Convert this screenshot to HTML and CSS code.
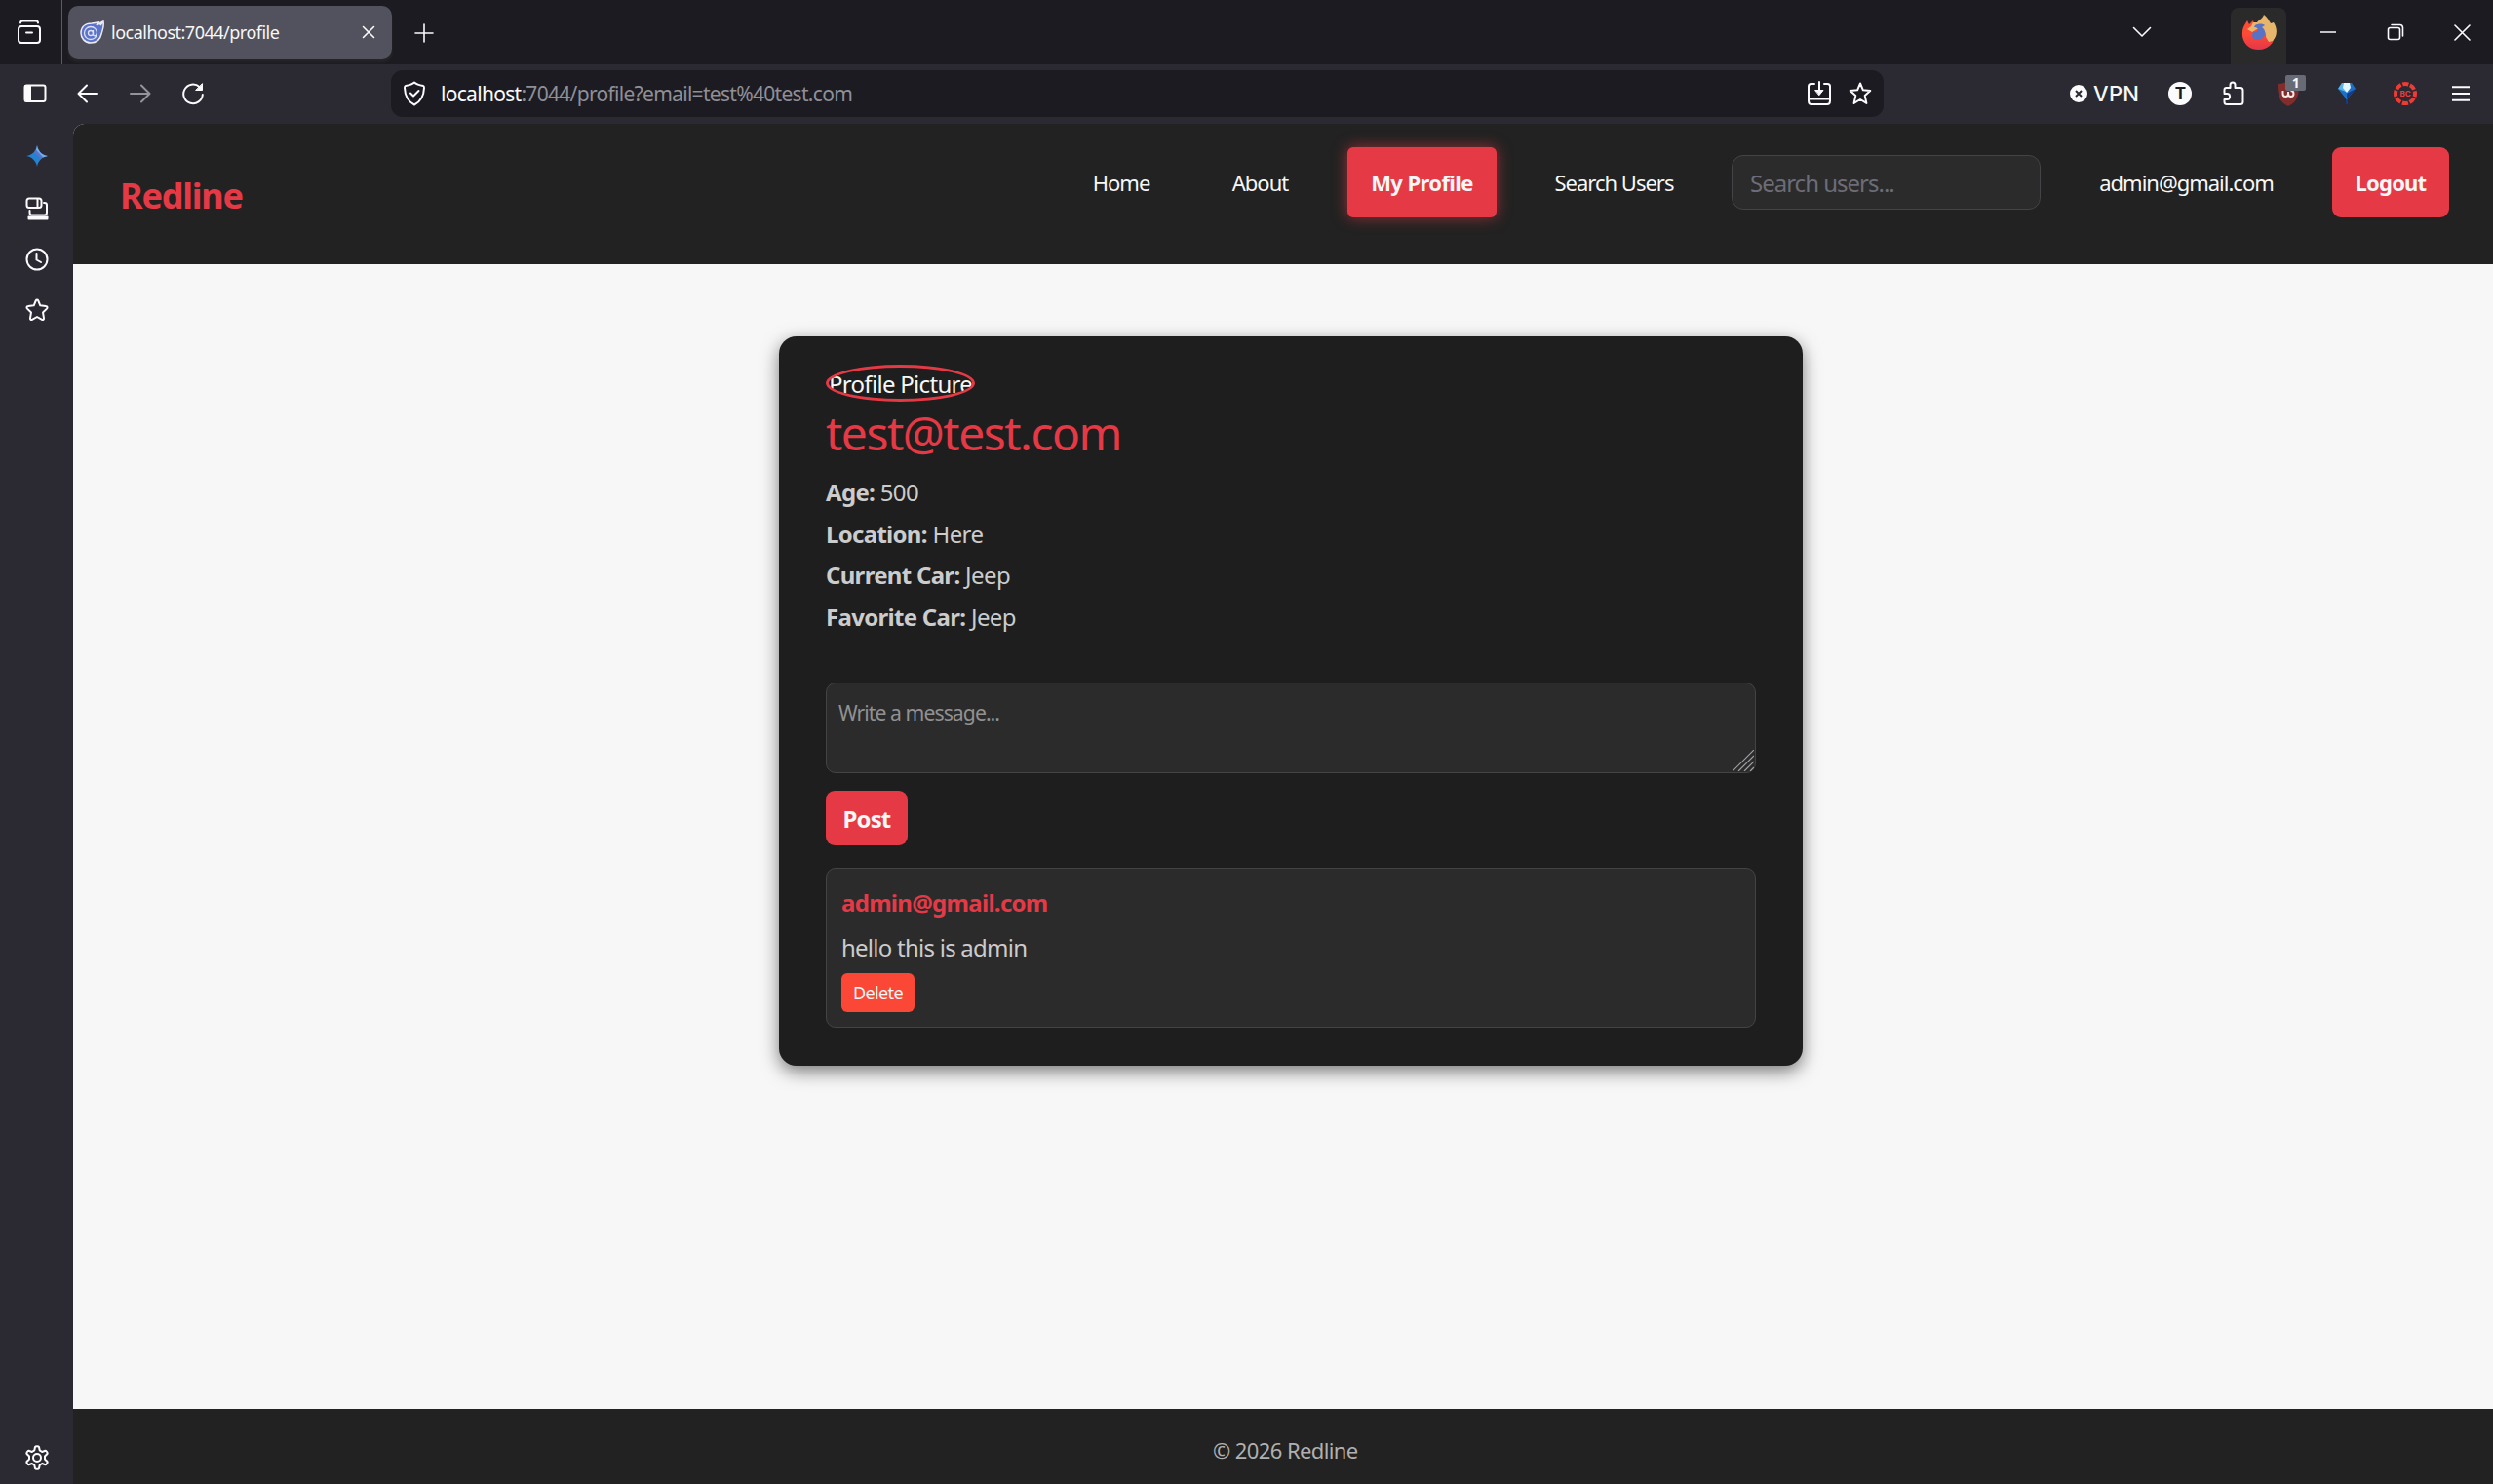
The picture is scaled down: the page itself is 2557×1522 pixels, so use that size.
FILE: index.html
```
<!DOCTYPE html>
<html lang="en">
<head>
    <meta charset="UTF-8">
    <title>localhost:7044/profile</title>
    <link rel="stylesheet" href="styles.css">
</head>
<body>
    <div class="titlebar">
        <div class="archive">
            <svg class="icon" width="26" height="26" viewBox="0 0 26 26"><path d="M4 3.500c0-1.500 1-2 2.500-2h13c1.500 0 2.500.5 2.500 2"/><rect x="2" y="7" width="22" height="17" rx="3"/><path d="M10 13.500h6"/></svg>
        </div>
        <div class="tab">
            <svg width="26" height="24" viewBox="0 0 26 24"><path d="M12 3C5 3 1 7 1 13c0 5 4 10 10 10 7 0 10-4 11-9 1-4 3-7 2-13l-3 4 1-3-5 3 2-3z" fill="#5a73cb" stroke="#eceaf5" stroke-width="1.500"/><circle cx="11" cy="13" r="6.500" fill="none" stroke="#dfe1f3" stroke-width="1.300"/><circle cx="11" cy="13" r="2.500" fill="none" stroke="#dfe1f3" stroke-width="1.300"/><path d="M13.500 10v4c0 3 4 2 4-1" fill="none" stroke="#dfe1f3" stroke-width="1.300"/></svg>
            <span class="tab-title">localhost:7044/profile</span>
            <svg class="icon thin" width="14" height="14" viewBox="0 0 14 14"><path d="M1.500 1.500l11 11M12.500 1.500l-11 11"/></svg>
        </div>
        <div class="new-tab">
            <svg class="icon thin" width="20" height="20" viewBox="0 0 20 20"><path d="M10 1v18M1 10h18"/></svg>
        </div>
        <div class="window-buttons">
            <div class="list-tabs">
                <svg class="icon thin" width="20" height="12" viewBox="0 0 20 12"><path d="M1.500 1.500L10 10l8.500-8.500"/></svg>
            </div>
            <div class="firefox">
                <svg width="36" height="38" viewBox="0 0 36 38">
                    <defs><linearGradient id="fox" x1="0" y1="0" x2="0" y2="1"><stop offset=".45" stop-color="#ff4b35"/><stop offset="1" stop-color="#e3364a"/></linearGradient></defs>
                    <path d="M3 12l3-5 2 4 4-4 1 4 6 0c5-2 9 0 12 5 7 9-1 21-13 21C7 37 0 29 1 19c0-3 1-5 2-7z" fill="url(#fox)"/>
                    <path d="M16 9c2-3 6-4 7-8 4 3 5 6 7 9l3-1c4 6 4 14-1 19l-4 1-3-5c1-6-4-9-9-8l-5 3-5-3 4-3 2-4z" fill="#e8b56c"/>
                    <path d="M14 12c3-2 8-2 10 0l-3 2c6 4 3 13-4 13-6 0-7-5-5-8l4-1c2-2 0-4-3-4z" fill="#5873c6"/>
                </svg>
            </div>
            <div class="window-btn"><svg class="icon thin" width="16" height="16" viewBox="0 0 16 16"><path d="M.5 8h15"/></svg></div>
            <div class="window-btn"><svg class="icon thin" width="18" height="18" viewBox="0 0 18 18"><rect x="1.500" y="4.500" width="12" height="12" rx="2"/><path d="M5 1.500h8.500c2 0 3 1 3 3V13"/></svg></div>
            <div class="window-btn"><svg class="icon thin" width="17" height="17" viewBox="0 0 17 17"><path d="M1 1l15 15M16 1L1 16"/></svg></div>
        </div>
    </div>

    <div class="toolbar">
        <div class="tool"><svg class="icon" width="24" height="20" viewBox="0 0 24 20"><rect x="1.500" y="1.500" width="21" height="16.500" rx="2"/><path d="M2 2h5v15.500H2z" fill="#fbfbfe"/></svg></div>
        <div class="tool"><svg class="icon" width="22" height="20" viewBox="0 0 22 20"><path d="M21 10H2M10 1.500L1.500 10l8.500 8.500"/></svg></div>
        <div class="tool disabled"><svg class="icon" width="22" height="20" viewBox="0 0 22 20"><path d="M1 10h19M12 1.500l8.500 8.500-8.500 8.500"/></svg></div>
        <div class="tool"><svg class="icon" width="24" height="24" viewBox="0 0 24 24"><path d="M18.500 5A9.800 9.800 0 1 0 21.800 13"/><path d="M21.500 2v6.500H15z" fill="#fbfbfe" stroke-width="1"/></svg></div>
        <div class="urlbar">
            <svg class="icon" width="24" height="26" viewBox="0 0 24 26"><path d="M12 1.500c2 1.800 6 3 9 3.500 1 .2 1 .8 1 2-.3 8-3 14-10 17.500C5 21 2.300 15 2 7c0-1.200 0-1.800 1-2 3-.5 7-1.700 9-3.500z"/><path d="M8 12.500l3 3 5.500-5.500"/></svg>
            <div class="url"><b>localhost</b>:7044/profile?email=test%40test.com</div>
            <svg class="icon save" width="26" height="26" viewBox="0 0 26 26"><path d="M8 3H4.500C3 3 2 4 2 5.500v15C2 23 3 24 5 24h16c2 0 3-1 3-3.500v-15C24 4 23 3 21.500 3H18M2.500 18.500h21M13 1v12"/><path d="M9 9.500h8l-4 5z" fill="#fbfbfe" stroke-width="1"/></svg>
            <svg class="icon" width="24" height="24" viewBox="0 0 24 24"><path d="M12 1.500l2.900 6.800 7.400.7-5.600 4.900 1.700 8L12 18l-6.400 3.900 1.700-8L1.700 9l7.400-.7z"/></svg>
        </div>
        <div class="vpn">
            <svg width="18" height="18" viewBox="0 0 18 18"><circle cx="9" cy="9" r="9" fill="#fbfbfe"/><path d="M6 6l6 6M12 6l-6 6" stroke="#2b2a33" stroke-width="2"/></svg>
            <span>VPN</span>
        </div>
        <div class="ext ext-t"><span class="account">T</span></div>
        <div class="ext ext-puzzle"><svg class="icon" width="22" height="26" viewBox="0 0 22 26"><path d="M1.500 12V9c0-1 .7-2 2-2H7.500V4c0-3.500 5-3.500 5 0v3h5.500c1.500 0 2.500 1 2.500 2.500v12c0 1.500-1 2.500-2.500 2.500H4c-1.500 0-2.500-1-2.500-2.500V19h3c3.500 0 3.500-6 0-6h-3"/></svg></div>
        <div class="ext ext-shield">
            <svg width="24" height="26" viewBox="0 0 24 26"><path d="M1 3c4 0 8-1 11-3 3 2 7 3 11 3 0 12-2 19-11 23C3 22 1 15 1 3z" fill="#822c2b"/><path d="M6.500 10v3c0 4 5.500 4 5.500 0v-2M12 13c0 4 5.500 4 5.500 0 0-2-1-3-3-3" fill="none" stroke="#f4e8e8" stroke-width="2"/></svg>
            <span class="badge">1</span>
        </div>
        <div class="ext ext-gem"><svg width="18" height="22" viewBox="0 0 18 22"><path d="M4 0h10l4 6-8 10v6H8v-6L0 6z" fill="#1d6fc4"/><path d="M4 0h4v9L0 6z" fill="#58b2e9"/><path d="M6 0h6l1 5-4 5-4-5z" fill="#e4f4fb"/><path d="M9 11l9-5-9 11zM8 17h2v5H8z" fill="#123b8e"/></svg></div>
        <div class="ext ext-bc"><svg width="24" height="24" viewBox="0 0 24 24"><circle cx="12" cy="12" r="10" fill="none" stroke="#f03a34" stroke-width="4" stroke-dasharray="6.200 1.654" stroke-dashoffset="3.100"/><text x="12" y="15" text-anchor="middle" class="bc-text">BC</text></svg></div>
        <div class="ext ext-menu"><svg class="icon" width="18" height="16" viewBox="0 0 18 16"><path d="M0 1.200h18M0 8h18M0 14.800h18"/></svg></div>
    </div>

    <div class="browser">
        <div class="sidebar">
            <svg width="22" height="22" viewBox="0 0 22 22"><path d="M11 0c1 6 5 10 11 11-6 1-10 5-11 11-1-6-5-10-11-11C6 10 10 6 11 0z" fill="#2582d0"/><path d="M11 0c1 6 5 10 11 11l-5 1.500L10 5z" fill="#79a9e8"/><path d="M10 5l7 7.500-2 1L8.500 8z" fill="#5d72cb"/></svg>
            <svg class="icon" width="24" height="24" viewBox="0 0 24 24"><rect x="1.500" y="1.500" width="15" height="9.500" rx="2.500"/><path d="M12.500 2v9M4.500 14v2c0 1.500.5 2.500 2 2.500h13c1.500 0 2.500-1 2.500-2.500V8c0-1.500-1-2-2.500-2H19"/><path d="M3.500 20.500h19v2h-19z"/></svg>
            <svg class="icon" width="24" height="24" viewBox="0 0 24 24"><circle cx="12" cy="12" r="10.500"/><path d="M11.500 6v6.500l4.500 2.500"/></svg>
            <svg class="icon" width="24" height="24" viewBox="0 0 24 24"><path d="M10.700 2.500c.6-1.200 2-1.200 2.600 0l2 4.800 5.700.8c1.700.2 2 1.500 1 2.500l-4 3.800 1 6c.2 1.500-1 2-2 1.500L12 19l-5 2.900c-1 .5-2.200 0-2-1.500l1-6-4-3.800c-1-1-.7-2.300 1-2.500l5.700-.8z"/></svg>
            <svg class="icon settings" width="24" height="26" viewBox="0 0 24 26"><path d="M10 2c.5-1 3.500-1 4 0l.7 3.300L17.200 7l3.300-1.200c1-.2 2.600 2.200 2 3.200L20 11.500v3l2.500 2.500c.6 1-1 3.400-2 3.200L17.200 19l-2.500 1.700L14 24c-.5 1-3.500 1-4 0l-.7-3.300L6.800 19l-3.300 1.200c-1 .2-2.600-2.200-2-3.200L4 14.500v-3L1.500 9c-.6-1 1-3.400 2-3.200L6.800 7l2.500-1.700z"/><circle cx="12" cy="13" r="4"/></svg>
        </div>

        <div class="page">
            <header class="header">
                <a class="logo" href="#">Redline</a>
                <nav class="nav">
                    <a class="home" href="#">Home</a>
                    <a class="about" href="#">About</a>
                    <a class="active" href="#">My Profile</a>
                    <a class="search-link" href="#">Search Users</a>
                    <input class="search" type="text" placeholder="Search users...">
                    <a class="user" href="#">admin@gmail.com</a>
                    <button class="logout">Logout</button>
                </nav>
            </header>

            <main class="content">
                <div class="card">
                    <div class="picture"><span>Profile Picture</span></div>
                    <h1>test@test.com</h1>
                    <p class="info"><b>Age:</b> 500</p>
                    <p class="info"><b>Location:</b> Here</p>
                    <p class="info"><b>Current Car:</b> Jeep</p>
                    <p class="info"><b>Favorite Car:</b> Jeep</p>

                    <div class="message-box">
                        <textarea placeholder="Write a message..."></textarea>
                        <svg class="resize" width="22" height="22" viewBox="0 0 22 22"><path d="M0 22L22 0M6 22L22 6M12 22l10-10M18 22l4-4"/></svg>
                    </div>
                    <button class="post">Post</button>

                    <div class="message">
                        <div class="author">admin@gmail.com</div>
                        <div class="text">hello this is admin</div>
                        <button class="delete">Delete</button>
                    </div>
                </div>
            </main>

            <footer class="footer">&copy; 2026 Redline</footer>
        </div>
    </div>
</body>
</html>
```
FILE: styles.css
```
* {
    box-sizing: border-box;
}

html, body {
    margin: 0;
    height: 100%;
    overflow: hidden;
}

body {
    display: flex;
    flex-direction: column;
    background-color: #2b2a33;
    color: #f7f7f7;
    font-family: "Noto Sans", "Open Sans", sans-serif;
    font-size: 24px;
    letter-spacing: -0.6px;
}

svg {
    display: block;
    flex: none;
}

.icon {
    fill: none;
    stroke: #fbfbfe;
    stroke-width: 2;
    stroke-linecap: round;
    stroke-linejoin: round;
}

.thin {
    stroke-width: 1.6;
}

a {
    color: inherit;
    text-decoration: none;
}

button, input, textarea {
    font-family: inherit;
    letter-spacing: inherit;
    border: none;
    outline: none;
    margin: 0;
}

/* window title bar */
.titlebar {
    display: flex;
    height: 66px;
    flex: none;
    background-color: #1c1b22;
}

.archive {
    width: 64px;
    padding: 20px 0 0 17px;
    border-right: 1px solid #5b5b66;
}

.tab {
    display: flex;
    align-items: center;
    width: 332px;
    height: 54px;
    margin: 6px 0 0 6px;
    padding: 0 17px 0 12px;
    border-radius: 10px;
    background-color: #52525e;
    box-shadow: 0 4px 3px #262626;
}

.tab-title {
    flex: 1;
    margin-left: 6px;
    font-size: 18px;
    letter-spacing: -0.5px;
}

.new-tab {
    padding: 24px 0 0 23px;
}

.window-buttons {
    display: flex;
    align-items: center;
    margin-left: auto;
    margin-right: -3px;
}

.list-tabs {
    margin-right: 81px;
}

.firefox {
    width: 57px;
    height: 58px;
    margin: 8px 8px 0 0;
    padding: 6px 0 0 11px;
    border-radius: 8px 8px 0 0;
    background-color: #2a2a2b;
}

.window-btn {
    display: flex;
    justify-content: center;
    width: 69px;
}

/* navigation toolbar */
.toolbar {
    display: flex;
    align-items: center;
    height: 61px;
    flex: none;
    padding: 0 0 1px 9px;
    background-color: #2b2a33;
}

.tool {
    display: flex;
    justify-content: center;
    width: 54px;
}

.disabled {
    opacity: 0.5;
}

.urlbar {
    display: flex;
    align-items: center;
    width: 1531px;
    height: 48px;
    margin-left: 176px;
    padding: 0 12px;
    border-radius: 12px;
    background-color: #1c1b22;
}

.url {
    flex: 1;
    margin-left: 15px;
    font-size: 21px;
    letter-spacing: -0.7px;
    color: #8f8f97;
}

.url b {
    font-weight: normal;
    color: #fbfbfe;
}

.save {
    margin-right: 17px;
}

.vpn {
    display: flex;
    align-items: center;
    gap: 6px;
    width: 82px;
    margin-left: 191px;
    font-family: Inter, "Noto Sans", sans-serif;
    font-size: 22px;
    font-weight: 500;
    letter-spacing: 0.3px;
}

.ext {
    display: flex;
    justify-content: center;
    position: relative;
}

.ext-t {
    width: 62px;
}

.ext-puzzle {
    width: 48px;
}

.ext-shield {
    width: 64px;
}

.ext-gem {
    width: 56px;
}

.ext-bc {
    width: 64px;
}

.ext-menu {
    width: 50px;
}

.account {
    width: 24px;
    height: 24px;
    border-radius: 50%;
    background-color: #fbfbfe;
    color: #1c1b22;
    font-family: Inter, sans-serif;
    font-size: 17px;
    font-weight: bold;
    line-height: 24px;
    text-align: center;
}

.badge {
    position: absolute;
    top: -6px;
    left: 29px;
    width: 21px;
    height: 16px;
    border-radius: 2px;
    background-color: #666b75;
    font-size: 14px;
    font-weight: bold;
    line-height: 16px;
    text-align: center;
}

.bc-text {
    fill: #f03a34;
    font-family: Inter, sans-serif;
    font-size: 8px;
    font-weight: bold;
    letter-spacing: 0;
}

/* sidebar and page */
.browser {
    display: flex;
    flex: 1;
    min-height: 0;
}

.sidebar {
    display: flex;
    flex-direction: column;
    align-items: center;
    width: 75px;
    flex: none;
    gap: 28px;
    padding: 22px 0 14px;
}

.sidebar svg:first-child {
    margin-bottom: 3px;
}

.settings {
    margin-top: auto;
}

.page {
    display: flex;
    flex: 1;
    flex-direction: column;
    overflow: hidden;
    border-top-left-radius: 12px;
    background-color: #f7f7f7;
}

.header {
    display: flex;
    align-items: flex-start;
    justify-content: space-between;
    height: 144px;
    flex: none;
    padding: 24px 45px 0 48px;
    background-color: #222222;
}

.logo {
    margin-top: 14px;
    color: #e63946;
    font-size: 36px;
    font-weight: bold;
    line-height: 72px;
    letter-spacing: -1.2px;
}

.nav {
    display: flex;
    align-items: center;
    gap: 36px;
    height: 72px;
    font-size: 22px;
    line-height: 72px;
    letter-spacing: -1px;
    text-align: center;
    white-space: nowrap;
}

.home {
    width: 106px;
}

.about {
    width: 107px;
}

.active {
    width: 153px;
    border-radius: 6px;
    background-color: #e63946;
    box-shadow: 0 0 15px rgba(230, 57, 70, 0.6);
    font-weight: bold;
    letter-spacing: -0.6px;
}

.search-link {
    width: 169px;
}

.search {
    width: 317px;
    height: 56px;
    padding: 0 18px;
    border: 1px solid #444448;
    border-radius: 12px;
    background-color: #2b2b2b;
    color: #f7f7f7;
    font-size: 24px;
}

.search::placeholder {
    color: #6c6d78;
    opacity: 1;
}

.user {
    width: 227px;
}

.logout {
    width: 120px;
    height: 72px;
    padding: 0;
    border-radius: 9px;
    background-color: #e63946;
    color: #f7f7f7;
    font-size: 22px;
    font-weight: bold;
    letter-spacing: -0.8px;
}

.content {
    flex: 1;
    padding-top: 74px;
}

.card {
    width: 1050px;
    height: 748px;
    margin-left: 724px;
    padding: 29px 48px 0;
    border-radius: 18px;
    background-color: #1e1e1e;
    box-shadow: 0 6px 18px rgba(0, 0, 0, 0.5);
}

.picture {
    width: 153px;
    height: 38px;
    overflow: hidden;
    border: 3px solid #e63946;
    border-radius: 50%;
    line-height: 34px;
    letter-spacing: -0.7px;
    white-space: nowrap;
}

.card h1 {
    margin: 1px 0 10px;
    color: #e63946;
    font-size: 48px;
    font-weight: normal;
    line-height: 61px;
    letter-spacing: -1.5px;
}

.info {
    margin: 0;
    color: #cccccc;
    line-height: 42.6px;
}

.info b, .author {
    letter-spacing: -0.7px;
}

.message-box {
    position: relative;
    height: 93px;
    margin-top: 46px;
}

.message-box textarea {
    display: block;
    width: 100%;
    height: 93px;
    padding: 14px 12px;
    border: 1px solid #444444;
    border-radius: 10px;
    background-color: #2b2b2b;
    color: #f7f7f7;
    font-size: 21.2px;
    line-height: 31px;
    letter-spacing: -0.95px;
    resize: none;
}

.message-box textarea::placeholder {
    color: #919191;
    opacity: 1;
}

.resize {
    position: absolute;
    right: 2px;
    bottom: 2px;
    fill: none;
    stroke: #a0a0a5;
    stroke-width: 1.2;
}

.post {
    display: block;
    width: 84px;
    height: 56px;
    margin-top: 18px;
    padding: 0;
    border-radius: 9px;
    background-color: #e63946;
    color: #f7f7f7;
    font-size: 24px;
    font-weight: bold;
    line-height: 57px;
    letter-spacing: -0.9px;
}

.message {
    height: 164px;
    margin-top: 23px;
    padding: 11px 15px;
    border: 1px solid #444444;
    border-radius: 10px;
    background-color: #2b2b2b;
}

.author {
    color: #e63946;
    font-weight: bold;
    line-height: 48px;
}

.text {
    color: #cccccc;
    line-height: 44px;
    letter-spacing: -0.75px;
}

.delete {
    display: block;
    width: 75px;
    height: 40px;
    margin-top: 4px;
    padding: 0;
    border-radius: 6px;
    background-color: #fa4736;
    color: #f7f7f7;
    font-size: 18px;
}

.footer {
    height: 77px;
    flex: none;
    padding-left: 1169px;
    background-color: #222222;
    color: #b0b0b0;
    font-size: 22px;
    line-height: 85px;
}
```
